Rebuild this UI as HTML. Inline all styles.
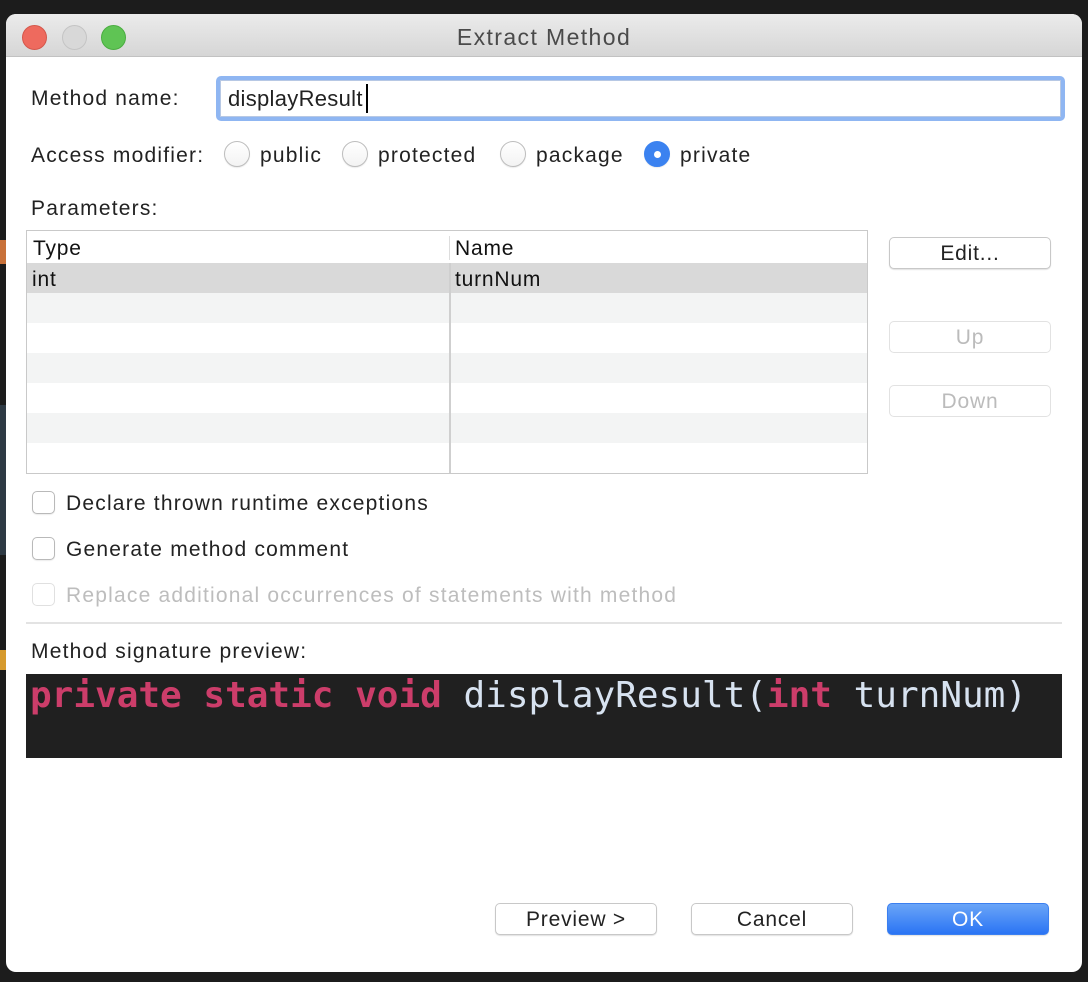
<!DOCTYPE html>
<html><head><meta charset="utf-8"><style>
*{box-sizing:border-box;margin:0;padding:0}
body{width:1088px;height:982px;background:#1c1c1c;position:relative;overflow:hidden;font-family:"Liberation Sans",sans-serif;color:#222;font-size:21px;letter-spacing:1.2px}
.a{position:absolute;white-space:nowrap}
#win{position:absolute;left:6px;top:14px;width:1076px;height:958px;background:#fff;border-radius:10px;overflow:hidden}
#tb{position:absolute;left:0;top:0;width:100%;height:43px;background:linear-gradient(#ebebeb,#d6d6d6);border-bottom:1px solid #c2c2c2}
.tl{position:absolute;top:11px;width:25px;height:25px;border-radius:50%}
.t{line-height:1}
.radio{position:absolute;width:26px;height:26px;border-radius:50%;border:1px solid #bdbdbd;background:linear-gradient(#fff,#f3f3f3);box-shadow:0 1px 1px rgba(0,0,0,.08)}
.btn{position:absolute;height:32px;border:1px solid #c8c8c8;border-radius:5px;background:#fff;text-align:center;line-height:32px;font-size:21px;letter-spacing:0.8px;box-shadow:0 1px 1px rgba(0,0,0,.12)}
.dis{color:#bbb;border-color:#e2e2e2;box-shadow:none}
.cb{position:absolute;width:23px;height:23px;border:1px solid #b9b9b9;border-radius:5px;background:#fff;box-shadow:0 1px 1px rgba(0,0,0,.08)}
.row{position:absolute;left:1px;width:839px;height:30px}
</style></head><body>
<div class="a" style="left:0;top:240px;width:6px;height:24px;background:#c8713a"></div>
<div class="a" style="left:0;top:405px;width:6px;height:150px;background:#2e3a44"></div>
<div class="a" style="left:0;top:650px;width:6px;height:20px;background:#d69a2d"></div>
<div id="win">
 <div id="tb">
  <div class="tl" style="left:16px;background:#ee6a5e;border:1px solid #d4574b"></div>
  <div class="tl" style="left:56px;background:#d8d8d8;border:1px solid #c4c4c4"></div>
  <div class="tl" style="left:95px;background:#5fc454;border:1px solid #4aad40"></div>
  <div class="a t" style="left:0;width:100%;text-align:center;top:12px;font-size:23px;letter-spacing:1.4px;color:#4a4a4a">Extract Method</div>
 </div>
</div>
<div class="a t" style="left:31px;top:88px">Method name:</div>
<div class="a" style="left:216px;top:76px;width:849px;height:45px;border-radius:5px;background:#8fb6f2"></div>
<div class="a" style="left:220px;top:80px;width:841px;height:37px;background:#fff;border:1px solid #b7c8e4"></div>
<div class="a t" style="left:228px;top:88px;font-size:22px;letter-spacing:0.3px">displayResult</div>
<div class="a" style="left:366px;top:84px;width:2px;height:29px;background:#000"></div>

<div class="a t" style="left:31px;top:145px">Access modifier:</div>
<div class="radio" style="left:224px;top:141px"></div><div class="a t" style="left:260px;top:145px">public</div>
<div class="radio" style="left:342px;top:141px"></div><div class="a t" style="left:378px;top:145px">protected</div>
<div class="radio" style="left:500px;top:141px"></div><div class="a t" style="left:536px;top:145px">package</div>
<div class="radio" style="left:644px;top:141px;background:#3b82f0;border-color:#3b82f0"><div style="position:absolute;left:9px;top:9px;width:7px;height:7px;border-radius:50%;background:#fff"></div></div><div class="a t" style="left:680px;top:145px">private</div>

<div class="a t" style="left:31px;top:198px">Parameters:</div>
<div class="a" style="left:26px;top:230px;width:842px;height:244px;border:1px solid #c9c9c9;background:#fff">
 <div class="a t" style="left:6px;top:7px;color:#111;letter-spacing:0.8px">Type</div>
 <div class="a t" style="left:428px;top:7px;color:#111;letter-spacing:0.8px">Name</div>
 <div class="row" style="top:32px;left:0;width:840px;background:#d9d9d9"></div>
 <div class="row" style="top:62px;left:0;width:840px;background:#f3f4f4"></div>
 <div class="row" style="top:122px;left:0;width:840px;background:#f3f4f4"></div>
 <div class="row" style="top:182px;left:0;width:840px;background:#f3f4f4"></div>
 <div class="a" style="left:422px;top:5px;width:1px;height:24px;background:#ddd"></div>
 <div class="a" style="left:422px;top:32px;width:2px;height:210px;background:#cfcfcf"></div>
 <div class="a t" style="left:5px;top:38px;color:#111;letter-spacing:0.8px">int</div>
 <div class="a t" style="left:428px;top:38px;color:#111;letter-spacing:0.8px">turnNum</div>
</div>
<div class="btn" style="left:889px;top:237px;width:162px">Edit...</div>
<div class="btn dis" style="left:889px;top:321px;width:162px">Up</div>
<div class="btn dis" style="left:889px;top:385px;width:162px">Down</div>

<div class="cb" style="left:32px;top:491px"></div><div class="a t" style="left:66px;top:493px">Declare thrown runtime exceptions</div>
<div class="cb" style="left:32px;top:537px"></div><div class="a t" style="left:66px;top:539px">Generate method comment</div>
<div class="cb" style="left:32px;top:583px;border-color:#e0e0e0;box-shadow:none"></div><div class="a t" style="left:66px;top:585px;color:#bdbdbd">Replace additional occurrences of statements with method</div>
<div class="a" style="left:26px;top:622px;width:1036px;height:2px;background:#e3e3e3"></div>
<div class="a t" style="left:31px;top:641px">Method signature preview:</div>
<div class="a" style="left:26px;top:674px;width:1036px;height:84px;background:#202020"></div>
<div class="a t" style="left:30px;top:678px;letter-spacing:0;font-family:'DejaVu Sans Mono','Liberation Mono',monospace;font-size:36px;font-weight:bold;color:#cc3d6a;line-height:36px">private static void <span style="font-weight:normal;color:#d7e2f0">displayResult(</span>int <span style="font-weight:normal;color:#d7e2f0">turnNum)</span></div>

<div class="btn" style="left:495px;top:903px;width:162px">Preview &gt;</div>
<div class="btn" style="left:691px;top:903px;width:162px">Cancel</div>
<div class="btn" style="left:887px;top:903px;width:162px;background:linear-gradient(#6aa5f7,#2a74f4);border-color:#3b7ff0;color:#fff">OK</div>
</body></html>
